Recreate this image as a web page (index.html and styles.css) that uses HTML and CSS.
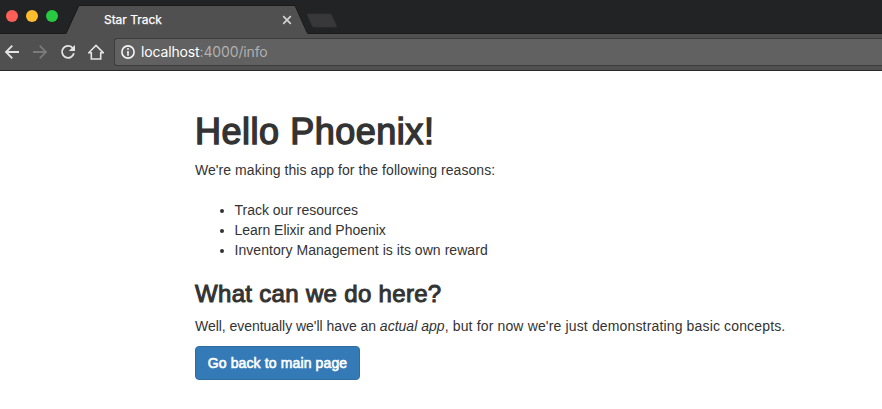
FILE: index.html
```html
<!DOCTYPE html>
<html lang="en">
<head>
<meta charset="utf-8">
<title>Star Track</title>
<link rel="stylesheet" href="styles.css">
</head>
<body>
<header class="chrome">
  <div class="tabstrip">
    <div class="lights"><i class="light red"></i><i class="light yellow"></i><i class="light green"></i></div>
    <div class="tab">
      <svg class="tab-shape" width="245" height="34" viewBox="0 0 245 34"><path class="tab-fill" d="M0 34 L13 5.5 H229 L242 34Z"/><path class="tab-edge" d="M0 33.5 L12.8 5.5 H229 L241.5 33.5"/></svg>
      <span class="tab-title">Star Track</span>
      <svg class="tab-close" width="10" height="10" viewBox="0 0 10 10"><path d="M1.2 1.2 8.8 8.8M8.8 1.2 1.2 8.8"/></svg>
    </div>
    <svg class="new-tab" width="34" height="16" viewBox="0 0 34 16"><path d="M3 .8H25Q26.3 .8 26.8 2L31.8 13Q32.2 14.3 30.8 14.3H9Q7.6 14.3 7 13L2 2Q1.6 .8 3 .8Z"/></svg>
  </div>
  <div class="toolbar">
    <div class="nav">
      <svg width="16" height="16" viewBox="0 0 16 16"><path d="M15 8H2.2M8.3 1.7 2 8l6.3 6.3"/></svg>
      <svg class="disabled" width="16" height="16" viewBox="0 0 16 16"><path d="M1 8h12.8M7.7 1.7 14 8l-6.3 6.3"/></svg>
      <svg width="16" height="16" viewBox="0 0 16 16"><path d="M13 4.4A6 6 0 1 0 13.9 9.3"/><path class="solid" d="M15 .9V7.1H8.8Z"/></svg>
      <svg width="16" height="16" viewBox="0 0 16 16"><path class="home" d="M.8 8.7 8 1.5l7.2 7.2H12.7V15H3.3V8.7Z"/></svg>
    </div>
    <div class="address">
      <svg width="14" height="14" viewBox="0 0 14 14"><circle cx="7" cy="7" r="6.1"/><path d="M7 6v4.7M7 3v1.8"/></svg>
      <span class="url"><b>localhost</b>:4000/info</span>
    </div>
  </div>
</header>
<main>
  <h1>Hello Phoenix!</h1>
  <p class="intro">We're making this app for the following reasons:</p>
  <ul>
    <li><span class="item1">Track our resources</span></li>
    <li><span class="item2">Learn Elixir and Phoenix</span></li>
    <li><span class="item3">Inventory Management is its own reward</span></li>
  </ul>
  <h3>What can we do here?</h3>
  <p class="summary">Well, eventually we'll have an <em>actual app</em><span class="aside">, but for now we're just demonstrating basic concepts.</span></p>
  <a class="btn" href="#">Go back to main page</a>
</main>
</body>
</html>
```
FILE: styles.css
```css
* { box-sizing: border-box; }
body {
  margin: 0;
  overflow: hidden;
  background: #fff;
  color: #333;
  font: 14px/20px "Liberation Sans", Arial, sans-serif;
}
svg { display: block; flex: none; }
.chrome { height: 71px; }
.tabstrip {
  display: flex;
  height: 34px;
  background: #222325;
  border-bottom: 1px solid #1b1b1c;
}
.lights { display: flex; gap: 8px; width: 66px; padding: 10px 0 0 6px; }
.light { width: 12px; height: 12px; border-radius: 50%; }
.red { background: #ff5f57; }
.yellow { background: #ffbd2e; }
.green { background: #28c940; }
.tab {
  position: relative;
  display: flex;
  align-items: center;
  justify-content: space-between;
  width: 242px;
  height: 34px;
  padding: 6px 16px 0 38px;
}
.tab-shape { position: absolute; left: 0; top: 0; }
.tab-fill { fill: #505050; }
.tab-edge { fill: none; stroke: #19191a; }
.tab-title { position: relative; color: #fff; font: 12px/14px Inter, sans-serif; letter-spacing: -.03px; -webkit-text-stroke: .25px #fff; }
.tab-close { position: relative; fill: none; stroke: #d2d2d2; stroke-width: 1.7; }
.new-tab { margin: 13px 0 0 -3px; fill: #38383a; stroke: #2b2b2c; stroke-width: .6; }
.toolbar {
  display: flex;
  height: 37px;
  padding: 4px 0;
  background: #505050;
  border-bottom: 1px solid #29292a;
}
.nav { display: flex; align-items: center; gap: 12px; width: 114px; padding-left: 4px; }
.nav svg { fill: none; stroke: #e4e4e4; stroke-width: 1.8; }
.nav svg.disabled { stroke: #7a7a7a; }
.nav .solid { fill: #e4e4e4; stroke: none; }
.nav .home { stroke-width: 1.6; }
.address {
  display: flex;
  align-items: center;
  flex: 1;
  gap: 6px;
  height: 28px;
  padding-left: 6px;
  background: #616161;
  border: 1px solid #3c3c3c;
  border-right: 0;
  border-radius: 3px 0 0 3px;
}
.address svg { fill: none; stroke: #f5f5f5; stroke-width: 1.6; }
.url { color: #b0b0b0; font: 14px/20px Inter, sans-serif; letter-spacing: -.14px; }
.url b { color: #fff; font-weight: 400; }
main { padding: 41px 0 0 195px; }
h1, h3 { font-weight: 400; line-height: 1.1; }
h1 { margin: 0 0 8px; font-size: 36px; letter-spacing: .52px; -webkit-text-stroke: 1.4px #333; }
h3 { margin: 0 0 9px; padding-top: 1px; font-size: 24px; letter-spacing: .32px; -webkit-text-stroke: 1px #333; }
p { margin: 0; white-space: nowrap; }
ul { margin: 20px 0; padding-left: 39.5px; }
.intro { letter-spacing: .06px; }
.item1, .item2 { letter-spacing: -.02px; }
.item3 { letter-spacing: .05px; }
.summary { margin-bottom: 10px; letter-spacing: -.04px; }
.summary em { letter-spacing: .02px; }
.aside { letter-spacing: .15px; }
.btn {
  display: inline-flex;
  justify-content: center;
  width: 165px;
  height: 34px;
  padding: 6px 0;
  background: #337ab7;
  border: 1px solid #2e6da4;
  border-radius: 4px;
  color: #fff;
  text-decoration: none;
  white-space: nowrap;
  letter-spacing: .13px;
  -webkit-text-stroke: .6px #fff;
}
```
